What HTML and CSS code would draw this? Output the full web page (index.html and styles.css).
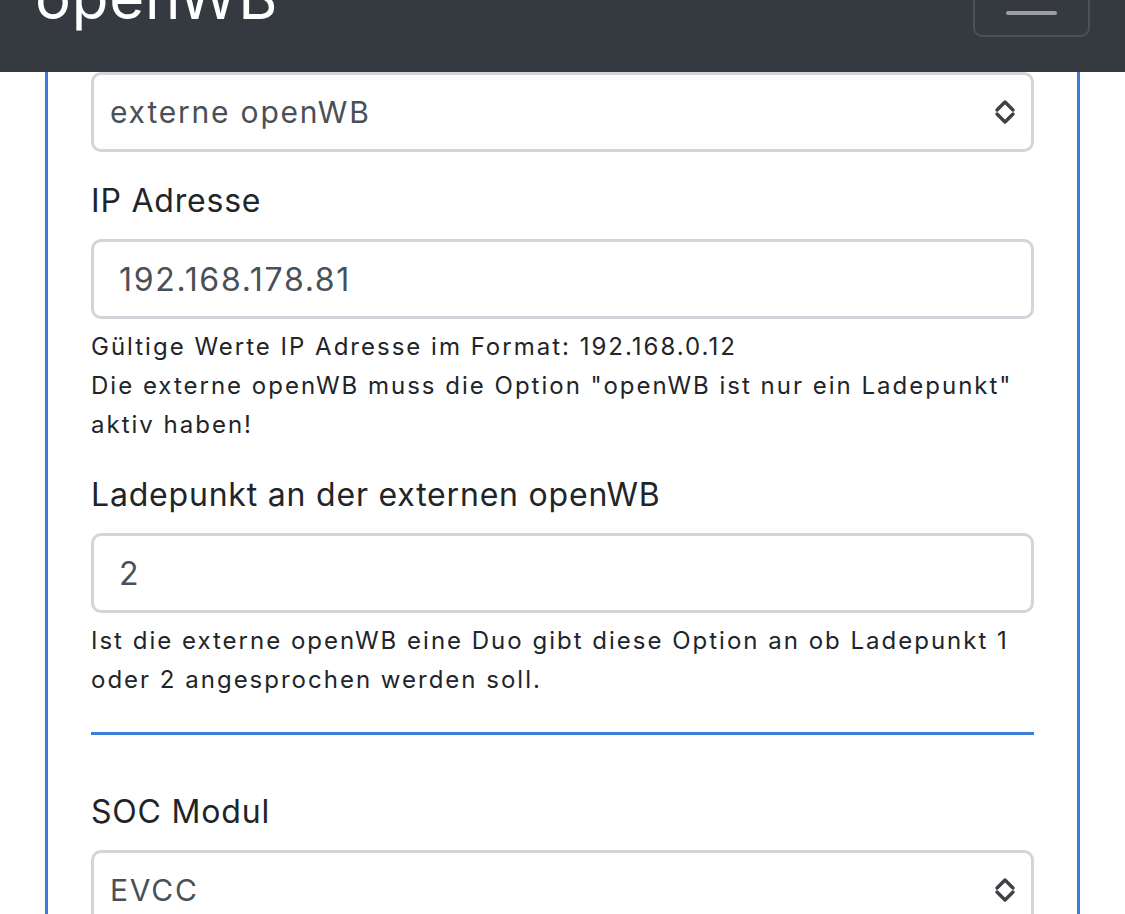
FILE: index.html
```html
<!DOCTYPE html>
<html lang="de">
<head>
<meta charset="utf-8">
<title>openWB</title>
<link rel="stylesheet" href="styles.css">
</head>
<body>
<nav class="navbar">
  <span class="brand">openWB</span>
  <button class="toggler" type="button"><span class="toggler-bar"></span></button>
</nav>
<main class="page">
  <div class="card">
    <div class="fake-select">
      <span class="select-value">externe openWB</span>
      <svg class="chevrons" width="24" height="28" viewBox="0 0 24 28"><path d="M4 12 L12 4 L20 12 M4 16 L12 24 L20 16" fill="none" stroke="#3d4145" stroke-width="3.4" stroke-linecap="round" stroke-linejoin="round"/></svg>
    </div>
    <div class="group">
      <label class="label">IP Adresse</label>
      <div class="input">192.168.178.81</div>
      <p class="help">Gültige Werte IP Adresse im Format: 192.168.0.12<br>Die externe openWB muss die Option "openWB ist nur ein Ladepunkt" aktiv haben!</p>
    </div>
    <div class="group second">
      <label class="label">Ladepunkt an der externen openWB</label>
      <div class="input">2</div>
      <p class="help">Ist die externe openWB eine Duo gibt diese Option an ob Ladepunkt 1 oder 2 angesprochen werden soll.</p>
    </div>
    <hr class="divider">
    <div class="group soc">
      <label class="label">SOC Modul</label>
      <div class="fake-select">
        <span class="select-value">EVCC</span>
        <svg class="chevrons" width="24" height="28" viewBox="0 0 24 28"><path d="M4 12 L12 4 L20 12 M4 16 L12 24 L20 16" fill="none" stroke="#3d4145" stroke-width="3.4" stroke-linecap="round" stroke-linejoin="round"/></svg>
      </div>
    </div>
  </div>
</main>
</body>
</html>
```
FILE: styles.css
```css
* { box-sizing: border-box; }
html, body { margin: 0; padding: 0; }
body {
  width: 1125px;
  height: 914px;
  overflow: hidden;
  background: #ffffff;
  font-family: "Inter", "Noto Sans", "Liberation Sans", sans-serif;
  color: #212529;
}
.navbar {
  height: 72px;
  background: #343a40;
  display: flex;
  justify-content: space-between;
  align-items: flex-start;
  padding: 0 35px 0 35px;
}
.brand {
  color: #ffffff;
  font-size: 60px;
  line-height: 60px;
  margin-top: -33px;
  letter-spacing: 0.8px;
}
.toggler {
  width: 117px;
  height: 47px;
  margin-top: -10px;
  background: transparent;
  border: 2px solid rgba(255,255,255,0.12);
  border-radius: 9px;
  display: flex;
  align-items: flex-start;
  justify-content: center;
  padding: 19px 0 0 0;
}
.toggler-bar {
  display: block;
  width: 51px;
  height: 4px;
  border-radius: 2px;
  background: #9c9ea1;
}
.page {
  padding: 0 45px;
}
.card {
  border: 3px solid #3b7ddb;
  border-top: none;
  border-bottom: none;
  padding: 0 43px;
  height: 842px;
}
.fake-select {
  height: 80px;
  border: 3px solid #d2d5d9;
  border-radius: 10px;
  display: flex;
  align-items: center;
  justify-content: space-between;
  padding: 0 14px 0 16px;
}
.select-value {
  font-size: 30px;
  color: #495057;
  letter-spacing: 1.8px;
}
.chevrons { display: block; }
.group { margin-top: 26px; }
.group.second { margin-top: 28px; }
.label {
  display: block;
  font-size: 32px;
  line-height: 46px;
  color: #212529;
  margin-bottom: 15px;
  letter-spacing: 0.8px;
}
.input {
  height: 80px;
  border: 3px solid #d2d5d9;
  border-radius: 10px;
  display: flex;
  align-items: center;
  padding: 0 25px;
  font-size: 32px;
  color: #495057;
  letter-spacing: 1.7px;
}
.help {
  margin: 8px 0 0 0;
  font-size: 24px;
  line-height: 39px;
  color: #212529;
  letter-spacing: 2px;
}
.divider {
  border: none;
  height: 3px;
  background: #3b7ddb;
  margin: 33px 0 0 0;
}
.group.soc { margin-top: 54px; }
.soc .label { margin-bottom: 15px; }
```
